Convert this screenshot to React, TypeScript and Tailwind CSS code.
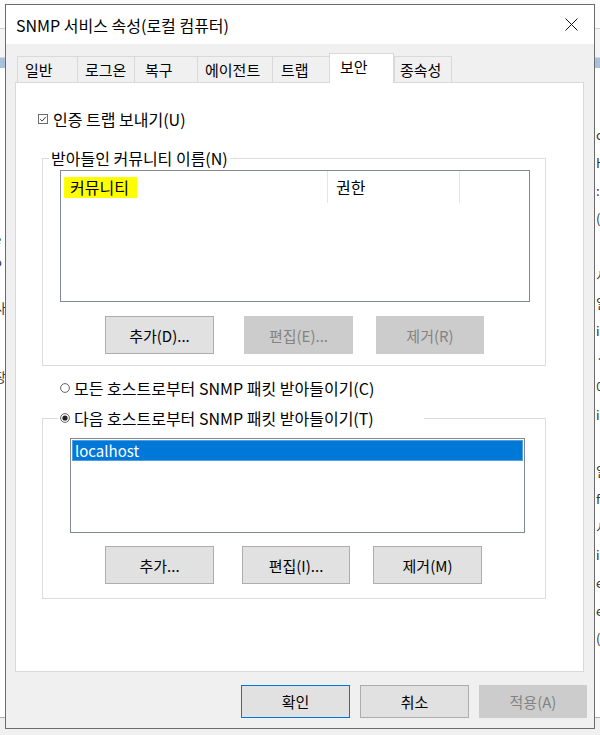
import React from "react";

const F = { fontFamily: '"Noto Sans CJK KR", "Noto Sans", sans-serif' };

function CheckGlyph() {
  return (
    <svg width="10" height="10" viewBox="0 0 10 10" className="block">
      <rect x="0.5" y="0.5" width="9" height="9" fill="white" stroke="#6d6d6d" />
      <path d="M2.2 5.2 L4.1 7.1 L7.8 2.8" fill="none" stroke="#444" strokeWidth="1" />
    </svg>
  );
}

function RadioGlyph({ on }: { on?: boolean }) {
  return (
    <svg width="10" height="10" viewBox="0 0 10 10" className="block">
      <circle cx="5" cy="5" r="4.4" fill="white" stroke="#555" strokeWidth="0.9" />
      {on && <circle cx="5" cy="5" r="2.6" fill="#222" />}
    </svg>
  );
}

function Btn({
  label,
  w,
  h,
  disabled,
  def,
  className = "",
}: {
  label: string;
  w: string;
  h: string;
  disabled?: boolean;
  def?: boolean;
  className?: string;
}) {
  const base = disabled
    ? "bg-[#cccccc] border-[#cccccc] text-[#838383]"
    : def
    ? "bg-[#e1e1e1] border-[#0078d7] text-black"
    : "bg-[#e1e1e1] border-[#adadad] text-black";
  return (
    <div className={`${w} ${h} ${base} ${className} border flex items-center justify-center text-[15px] leading-none shrink-0`}>
      {label}
    </div>
  );
}

const tabs = [
  { t: "일반", w: "w-[60px]", pl: "pl-[7px]" },
  { t: "로그온", w: "w-[57px]", pl: "pl-[7px]" },
  { t: "복구", w: "w-[63px]", pl: "pl-[10px]" },
  { t: "에이전트", w: "w-[75px]", pl: "pl-[7px]" },
  { t: "트랩", w: "w-[57px]", pl: "pl-[8px]" },
  { t: "보안", w: "w-[65px]", pl: "pl-[10px]", sel: true },
  { t: "종속성", w: "w-[58px]", pl: "pl-[5px]" },
];

export default function App() {
  return (
    <div className="relative w-[600px] h-[735px] overflow-hidden bg-white" style={F}>
      {/* background window */}
      <div className="absolute inset-0 flex flex-col bg-white">
        <div className="h-[28px] bg-[#fbfbfb]" />
        <div className="h-px bg-[#d0d0d0]" />
        <div className="h-[28px] bg-[#f5f5f5]" />
        <div className="h-px bg-[#d8d8d8]" />
        <div className="h-[10px] bg-[#a9c0dd]" />
        <div className="flex-1 bg-white" />
        <div className="h-px bg-[#b0b0b0]" />
        <div className="h-[17px] bg-[#f0f0f0]" />
      </div>
      <div className="absolute left-[-6px] top-[232px] flex flex-col gap-[9px] text-[13px] leading-[14px] text-[#333]">
        <span>e</span>
        <span>o</span>
        <span>·</span>
        <span>사</span>
        <span>&nbsp;</span>
        <span>&nbsp;</span>
        <span>장</span>
      </div>
      <div className="absolute left-[596px] top-[128px] flex flex-col gap-[14px] text-[13px] leading-[14px] text-[#333]">
        <span>c</span>
        <span>H</span>
        <span>:</span>
        <span>(</span>
        <span>&nbsp;</span>
        <span>시</span>
        <span>일</span>
        <span>i</span>
        <span>·</span>
        <span>아</span>
        <span>i</span>
        <span>&nbsp;</span>
        <span>일</span>
        <span>fi</span>
        <span>시</span>
        <span>i</span>
        <span>e</span>
        <span>e</span>
        <span>(</span>
      </div>

      {/* dialog */}
      <div className="absolute left-[5px] top-[4px] w-[590px] h-[725px] border border-[#6b6b6b] bg-[#f0f0f0] flex flex-col">
        <div className="h-[39px] bg-white flex items-center justify-between pl-[10px] pr-[16px] shrink-0">
          <span className="text-[16px] leading-none text-black">SNMP 서비스 속성(로컬 컴퓨터)</span>
          <svg width="13" height="13" viewBox="0 0 13 13">
            <path d="M0.5 0.5 L12.5 12.5 M12.5 0.5 L0.5 12.5" stroke="#111" strokeWidth="1" />
          </svg>
        </div>

        {/* tabs */}
        <div className="mt-[9px] h-[29px] flex items-end pl-[11px] relative z-10">
          {tabs.map((tb, i) => (
            <div
              key={tb.t}
              className={
                tb.sel
                  ? `${tb.w} ${tb.pl} h-[30px] -mb-px bg-white border-t border-l border-r border-[#d9d9d9] flex items-center text-[15px] leading-none pb-[4px]`
                  : `${tb.w} ${tb.pl} h-[26px] bg-[#f0f0f0] border-t border-l ${i === tabs.length - 1 ? "border-r" : ""} border-[#d9d9d9] flex items-center text-[15px] leading-none`
              }
            >
              {tb.t}
            </div>
          ))}
        </div>

        {/* panel */}
        <div className="ml-[9px] w-[569px] h-[590px] bg-white border border-[#d9d9d9] flex flex-col shrink-0">
          <div className="mt-[26px] ml-[22px] h-[20px] flex items-center gap-[5px] text-[16px] leading-none">
            <CheckGlyph />
            <span>인증 트랩 보내기(U)</span>
          </div>

          <fieldset className="mt-[19px] ml-[26px] w-[504px] border border-[#dcdcdc] flex flex-col pb-[11px]">
            <legend className="ml-[6px] px-[2px] h-[20px] flex items-center text-[16px] leading-none">받아들인 커뮤니티 이름(N)</legend>
            <div className="mt-[2px] ml-[17px] w-[470px] h-[132px] border border-[#828790] bg-white flex flex-col">
              <div className="h-[32px] flex items-stretch">
                <div className="w-[266px] flex items-center">
                  <span className="ml-[3px] h-[21px] pl-[6px] pr-[8px] bg-[#ffff00] flex items-center text-[16px] leading-none">커뮤니티</span>
                </div>
                <div className="w-[132px] border-l border-[#e5e5e5] flex items-center pl-[8px] text-[16px] leading-none">권한</div>
                <div className="flex-1 border-l border-[#e5e5e5]" />
              </div>
            </div>
            <div className="mt-[14px] flex">
              <Btn label="추가(D)..." w="w-[109px]" h="h-[38px]" className="ml-[62px]" />
              <Btn label="편집(E)..." w="w-[109px]" h="h-[38px]" className="ml-[30px]" disabled />
              <Btn label="제거(R)" w="w-[108px]" h="h-[38px]" className="ml-[23px]" disabled />
            </div>
          </fieldset>

          <div className="mt-[12px] ml-[44px] h-[20px] flex items-center gap-[4px] text-[16px] leading-none">
            <RadioGlyph />
            <span>모든 호스트로부터 SNMP 패킷 받아들이기(C)</span>
          </div>

          <fieldset className="mt-[10px] ml-[26px] w-[504px] border border-[#dcdcdc] flex flex-col pb-[14px]">
            <legend className="ml-[15px] w-[366px] pl-[2px] h-[20px] flex items-center gap-[4px] text-[16px] leading-none">
              <RadioGlyph on />
              <span>다음 호스트로부터 SNMP 패킷 받아들이기(T)</span>
            </legend>
            <div className="mt-[10px] ml-[27px] w-[455px] h-[95px] border border-[#828790] bg-white p-px">
              <div className="h-[21px] bg-[#0078d7] border border-[#4da0e3] flex items-center pl-[2px] text-white text-[15px] leading-none">
                localhost
              </div>
            </div>
            <div className="mt-[13px] flex">
              <Btn label="추가..." w="w-[109px]" h="h-[38px]" className="ml-[62px]" />
              <Btn label="편집(I)..." w="w-[108px]" h="h-[38px]" className="ml-[28px]" />
              <Btn label="제거(M)" w="w-[109px]" h="h-[38px]" className="ml-[23px]" />
            </div>
          </fieldset>
        </div>

        {/* bottom buttons */}
        <div className="mt-[13px] flex justify-end pr-[7px] gap-[10px]">
          <Btn label="확인" w="w-[109px]" h="h-[33px]" def />
          <Btn label="취소" w="w-[109px]" h="h-[33px]" />
          <Btn label="적용(A)" w="w-[108px]" h="h-[33px]" disabled />
        </div>
      </div>
    </div>
  );
}
